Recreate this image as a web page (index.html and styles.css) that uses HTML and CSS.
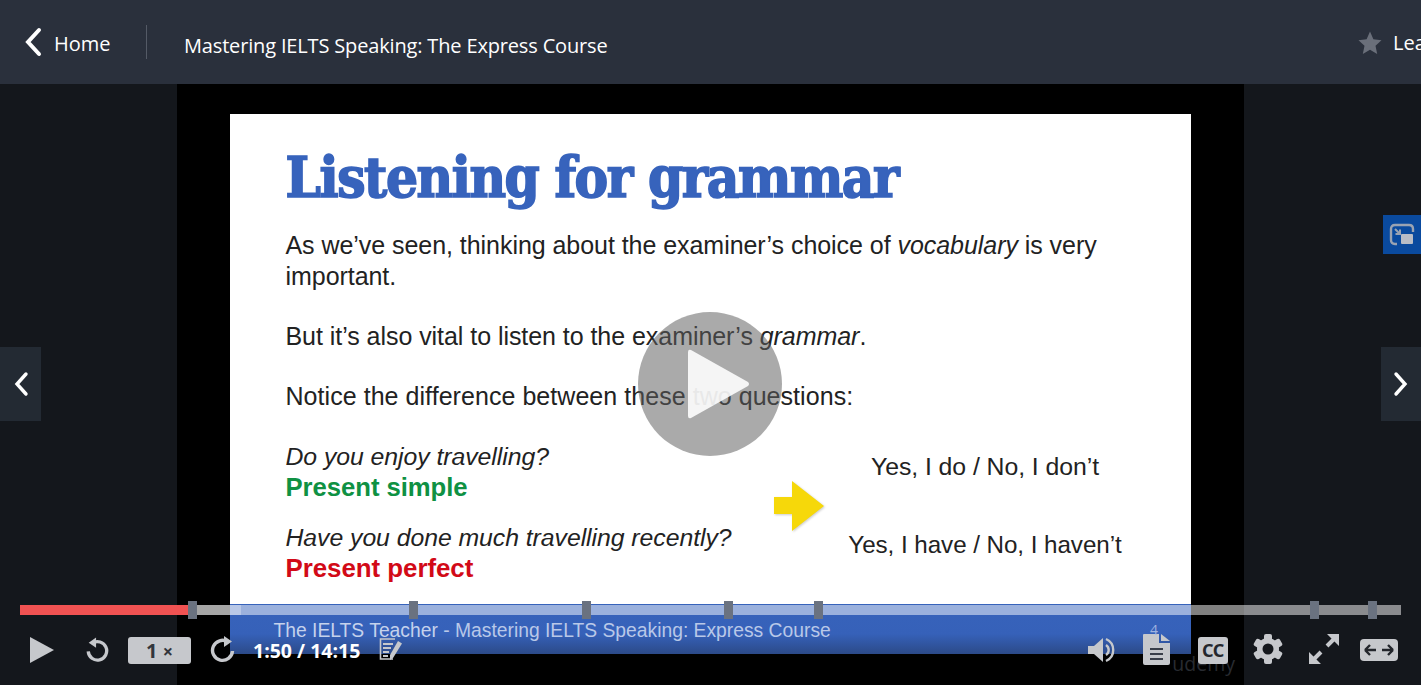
FILE: index.html
```html
<!DOCTYPE html>
<html lang="en">
<head>
    <meta charset="UTF-8">
    <title>Mastering IELTS Speaking: The Express Course</title>
    <link rel="stylesheet" href="styles.css">
</head>
<body>
    <header class="topbar">
        <a class="home-link">
            <svg class="home-chevron" width="20" height="30" viewBox="0 0 20 30"><path d="M16 3 L5 15 L16 27" fill="none" stroke="#fff" stroke-width="4" stroke-linecap="round" stroke-linejoin="miter"/></svg>
            <span>Home</span>
        </a>
        <div class="divider"></div>
        <div class="course-title">Mastering IELTS Speaking: The Express Course</div>
        <div class="rating">
            <svg width="24" height="24" viewBox="0 0 24 24"><path d="M12 0.5 L15.4 8.2 L23.5 9.2 L17.5 14.8 L19.2 23 L12 18.8 L4.8 23 L6.5 14.8 L0.5 9.2 L8.6 8.2 Z" fill="#6a6f7a"/></svg>
            <span>Leave a rating</span>
        </div>
    </header>

    <main class="stage">
        <div class="letterbox">
            <section class="slide">
                <div class="slide-body">
                    <h1 class="slide-title">Listening for grammar</h1>
                    <p class="para para-first">As we’ve seen, thinking about the examiner’s choice of <em>vocabulary</em> is very<br>important.</p>
                    <p class="para">But it’s also vital to listen to the examiner’s <em>grammar</em>.</p>
                    <p class="para para-notice">Notice the difference between these two questions:</p>
                    <div class="examples">
                        <div class="questions">
                            <p class="para q-first"><em>Do you enjoy travelling?</em><br><strong class="green">Present simple</strong></p>
                            <p class="para q-second"><em>Have you done much travelling recently?</em><br><strong class="red">Present perfect</strong></p>
                        </div>
                        <svg class="yellow-arrow" width="52" height="52" viewBox="0 0 52 52"><path d="M1 17 H19 V1 L51 26 L19 51 V34 H1 Z" fill="#f6d80a"/></svg>
                        <div class="answers">
                            <p class="para">Yes, I do / No, I don’t</p>
                            <p class="para answer-long">Yes, I have / No, I haven’t</p>
                        </div>
                    </div>
                </div>
                <div class="slide-footer">
                    <span>The IELTS Teacher</span> <span class="footer-sub">- Mastering IELTS Speaking: Express Course</span>
                </div>
            </section>
        </div>

        <button class="side-nav side-prev">
            <svg width="20" height="30" viewBox="0 0 20 30"><path d="M15 5 L6 15 L15 25" fill="none" stroke="#fff" stroke-width="3.4" stroke-linecap="round"/></svg>
        </button>
        <button class="side-nav side-next">
            <svg width="20" height="30" viewBox="0 0 20 30"><path d="M5 5 L14 15 L5 25" fill="none" stroke="#fff" stroke-width="3.4" stroke-linecap="round"/></svg>
        </button>

        <button class="pip">
            <svg width="26" height="24" viewBox="0 0 26 24">
                <path d="M8 21 H6 Q2 21 2 17 V6 Q2 2 6 2 H20 Q24 2 24 6 V9" fill="none" stroke="#9aa3b2" stroke-width="2.4"/>
                <path d="M6 6 L11 11 M11 6.5 V11 H6.5" fill="none" stroke="#9aa3b2" stroke-width="2"/>
                <rect x="12" y="11" width="12" height="10" rx="1" fill="#b9bdc6"/>
            </svg>
        </button>

        <div class="big-play">
            <svg width="64" height="70" viewBox="0 0 64 70"><path d="M4 1 L61 33 Q63 35 61 37 L4 69 Q1 70 1 67 V3 Q1 0 4 1 Z" fill="rgba(255,255,255,0.88)"/></svg>
        </div>

        <div class="player-controls">
            <div class="seekbar">
                <div class="seek-buffer"></div>
                <div class="seek-played"></div>
                <span class="marker" style="left: 12.45%"></span>
                <span class="marker" style="left: 28.45%"></span>
                <span class="marker" style="left: 41%"></span>
                <span class="marker" style="left: 51.3%"></span>
                <span class="marker" style="left: 57.8%"></span>
                <span class="marker" style="left: 93.7%"></span>
                <span class="marker" style="left: 97.9%"></span>
            </div>
            <div class="control-row">
                <div class="controls-left">
                    <svg class="ctl-play" width="24" height="26" viewBox="0 0 24 26"><path d="M0 0 L24 13 L0 26 Z" fill="#c6c8cc"/></svg>
                    <svg class="ctl-replay" width="24" height="27" viewBox="0 0 26 28"><path d="M8 6 A10 10 0 1 1 3.5 15" fill="none" stroke="#c6c8cc" stroke-width="3.6"/><path d="M12 0 V11 L4 5.5 Z" fill="#c6c8cc"/></svg>
                    <div class="speed">1 <small>×</small></div>
                    <svg class="ctl-forward" width="26" height="28" viewBox="0 0 26 28"><path d="M18 6 A10 10 0 1 0 22.5 15" fill="none" stroke="#c6c8cc" stroke-width="3.4"/><path d="M14 0 V11 L22 5.5 Z" fill="#c6c8cc"/></svg>
                    <div class="time">1:50 / 14:15</div>
                    <svg class="ctl-notes" width="24" height="24" viewBox="0 0 24 24">
                        <path d="M16 1 H1.5 V21 H14" fill="none" stroke="#c6c8cc" stroke-width="1.6"/>
                        <path d="M4 6 H14 M4 10 H12 M4 14 H10 M4 18 H9" stroke="#c6c8cc" stroke-width="1.8"/>
                        <path d="M19 3 L23 5.5 L14 20 L11 22 L11 17 Z" fill="#c6c8cc"/>
                    </svg>
                </div>
                <div class="controls-right">
                    <span class="watermark">udemy</span>
                    <svg class="ctl-volume" width="28" height="26" viewBox="0 0 28 26">
                        <path d="M0 9 H6 L15 1 V25 L6 17 H0 Z" fill="#c6c8cc"/>
                        <path d="M18 8 A6 6 0 0 1 18 18" fill="none" stroke="#c6c8cc" stroke-width="2.4"/>
                        <path d="M18 2 A12 12 0 0 1 18 24" fill="none" stroke="#c6c8cc" stroke-width="2.4"/>
                    </svg>
                    <div class="ctl-transcript">
                        <span class="doc-count">4</span>
                        <svg width="27" height="31" viewBox="0 0 27 31">
                            <path d="M1 0 H16 V9 H27 V29 Q27 31 25 31 H2 Q0 31 0 29 V1 Q0 0 1 0 Z" fill="#c6c8cc"/>
                            <path d="M18 0 L27 7 H18 Z" fill="#c6c8cc"/>
                            <path d="M7 15 H20 M7 20 H20 M7 25 H20" stroke="#3a3f4a" stroke-width="2.2"/>
                        </svg>
                    </div>
                    <div class="ctl-cc">CC</div>
                    <svg class="ctl-gear" width="30" height="30" viewBox="0 0 30 30">
                        <g fill="#c6c8cc">
                            <rect x="11" y="0" width="8" height="30" rx="2"/>
                            <rect x="11" y="0" width="8" height="30" rx="2" transform="rotate(60 15 15)"/>
                            <rect x="11" y="0" width="8" height="30" rx="2" transform="rotate(120 15 15)"/>
                        </g>
                        <circle cx="15" cy="15" r="8.5" fill="none" stroke="#c6c8cc" stroke-width="5"/>
                        <circle cx="15" cy="15" r="5.5" fill="#15181d"/>
                    </svg>
                    <svg class="ctl-expand" width="30" height="30" viewBox="0 0 30 30">
                        <path d="M3 27 L12 18 M18 12 L27 3" stroke="#c6c8cc" stroke-width="4"/>
                        <path d="M0 30 V18 L12 30 Z M30 0 V12 L18 0 Z" fill="#c6c8cc"/>
                    </svg>
                    <svg class="ctl-wide" width="38" height="22" viewBox="0 0 38 22">
                        <rect width="38" height="22" rx="4" fill="#c6c8cc"/>
                        <path d="M5 11 H16 M5 11 L10 6 M5 11 L10 16 M33 11 H22 M33 11 L28 6 M33 11 L28 16" fill="none" stroke="#23262c" stroke-width="2.4"/>
                    </svg>
                </div>
            </div>
        </div>
    </main>
</body>
</html>
```

FILE: styles.css
```css
html, body {
    height: 100%;
}

body {
    margin: 0;
    overflow: hidden;
    background-color: #14171c;
    font-family: "Open Sans", "Noto Sans", sans-serif;
    display: flex;
    flex-direction: column;
}

/* top bar */
.topbar {
    height: 84px;
    flex: none;
    background-color: #2a303c;
    color: #fff;
    display: flex;
    align-items: center;
    padding-left: 23px;
    position: relative;
    overflow: hidden;
}

.home-link {
    display: flex;
    align-items: center;
    gap: 11px;
    font-size: 20px;
    width: 123px;
}

.home-link span {
    margin-top: 2px;
}

.divider {
    width: 1px;
    height: 34px;
    background-color: #545a66;
}

.course-title {
    margin: 6px 0 0 37px;
    font-size: 20px;
    letter-spacing: -0.16px;
}

.rating {
    position: absolute;
    left: 1358px;
    top: 29px;
    display: flex;
    align-items: center;
    gap: 11px;
    font-size: 20px;
    white-space: nowrap;
}

/* video area */
.stage {
    flex: 1;
    position: relative;
    display: flex;
    justify-content: center;
}

.letterbox {
    width: 1067px;
    height: 100%;
    margin-right: 1px;
    background-color: #000;
    display: flex;
    justify-content: center;
    padding-top: 30px;
    box-sizing: border-box;
}

.slide {
    width: 961px;
    height: 540px;
    background-color: #fff;
    color: #222;
    display: flex;
    flex-direction: column;
    font-family: "Liberation Sans", Arial, sans-serif;
}

.slide-body {
    flex: 1;
    padding: 28px 0 0 56px;
}

.slide-title {
    margin: 0;
    font-family: "DejaVu Serif Condensed", "DejaVu Serif", serif;
    font-size: 56px;
    font-weight: bold;
    line-height: 70px;
    letter-spacing: -1.45px;
    -webkit-text-stroke: 1.6px #3763bc;
    color: #3763bc;
}

.para {
    margin: 30px 0 0;
    font-size: 25px;
    line-height: 30.5px;
    letter-spacing: -0.05px;
}

.para-first {
    margin-top: 18px;
}

.para-notice {
    margin-top: 29.5px;
    letter-spacing: 0.05px;
}

.examples {
    display: flex;
    position: relative;
}

.questions {
    width: 487px;
}

.questions em {
    font-size: 24.8px;
}

.q-first {
    margin-top: 29px;
}

.q-second {
    margin-top: 19px;
}

.green {
    color: #0f9143;
    font-size: 25.7px;
}

.red {
    color: #d20a17;
    font-size: 25.9px;
}

.yellow-arrow {
    margin-top: 68px;
    flex: none;
    filter: drop-shadow(1px 1px 1px rgba(0, 0, 0, 0.2));
}

.answers {
    margin-left: 23px;
    text-align: center;
    width: 275px;
}

.answers .para {
    margin-top: 40px;
    white-space: nowrap;
    font-size: 24.8px;
}

.answers .answer-long {
    margin-top: 48px;
    font-size: 24.2px;
}

.slide-footer {
    height: 50px;
    flex: none;
    padding: 16px 0 0 44px;
    box-sizing: border-box;
    background: linear-gradient(#3763bb 0, #3661b9 60%, #2c4a88 100%);
    color: #c5d2ec;
    font-size: 19.3px;
}

.footer-sub {
    color: #b9c8e8;
}

/* overlays */
.side-nav {
    position: absolute;
    top: 263px;
    width: 41px;
    height: 74px;
    padding: 0;
    border: none;
    background-color: #232a33;
    display: flex;
    align-items: center;
    justify-content: center;
}

.side-prev {
    left: 0;
}

.side-next {
    right: 0;
    width: 40px;
}

.pip {
    position: absolute;
    right: 0;
    top: 131px;
    width: 38px;
    height: 39px;
    padding: 0;
    border: none;
    background-color: #0a4a9e;
    display: flex;
    align-items: center;
    justify-content: center;
}

.big-play {
    position: absolute;
    left: 638px;
    top: 228px;
    width: 144px;
    height: 144px;
    border-radius: 50%;
    background-color: rgba(94, 94, 94, 0.53);
    display: flex;
    align-items: center;
    justify-content: center;
}

.big-play svg {
    margin-left: 18px;
}

.player-controls {
    position: absolute;
    left: 0;
    right: 0;
    bottom: 0;
    height: 81px;
    padding: 0 20px;
    box-sizing: border-box;
    z-index: 1;
}

.seekbar {
    position: relative;
    height: 10px;
    background-color: rgba(255, 255, 255, 0.5);
    margin-top: 1px;
}

.seek-buffer {
    position: absolute;
    left: 0;
    top: 0;
    bottom: 0;
    width: 221px;
    background-color: rgba(255, 255, 255, 0.3);
}

.seek-played {
    position: absolute;
    left: 0;
    top: 0;
    bottom: 0;
    width: 170px;
    background-color: #f05252;
}

.marker {
    position: absolute;
    top: -4px;
    width: 9px;
    height: 18px;
    margin-left: -4px;
    background-color: #6a7280;
}

.control-row {
    display: flex;
    justify-content: space-between;
    margin-top: 21px;
}

.controls-left,
.controls-right {
    display: flex;
    align-items: center;
    height: 28px;
}

.controls-right {
    position: relative;
    padding-right: 3px;
}

.ctl-play {
    margin-left: 10px;
}

.ctl-replay {
    margin-left: 31px;
}

.speed {
    margin-left: 19px;
    width: 63px;
    height: 27px;
    border-radius: 3px;
    background-color: #c6c8cc;
    color: #33363c;
    font-size: 20px;
    font-weight: bold;
    line-height: 27px;
    text-align: center;
}

.speed small {
    font-size: 18px;
}

.ctl-forward {
    margin-left: 19px;
}

.time {
    margin-left: 17px;
    color: #fff;
    font-size: 19.5px;
    font-weight: bold;
    white-space: nowrap;
}

.ctl-notes {
    margin-left: 19px;
}

.watermark {
    position: absolute;
    right: 166px;
    top: 14px;
    font-size: 19.5px;
    color: #282b31;
    z-index: -1;
}

.ctl-volume {
    left: 1px;
    position: relative;
}

.ctl-transcript {
    position: relative;
    margin-left: 28px;
    height: 31px;
    top: -1px;
}

.doc-count {
    position: absolute;
    left: 7px;
    top: -14px;
    font-size: 14px;
    color: #a0b4e0;
}

.ctl-cc {
    margin-left: 28px;
    width: 30px;
    height: 27px;
    border-radius: 3px;
    background-color: #c6c8cc;
    color: #23262c;
    font-family: "Noto Sans", sans-serif;
    font-size: 18px;
    font-weight: bold;
    line-height: 26px;
    text-align: center;
    letter-spacing: -0.5px;
}

.ctl-gear {
    margin-left: 25px;
    position: relative;
    top: -1px;
}

.ctl-expand {
    margin-left: 26px;
    position: relative;
    top: -1px;
}

.ctl-wide {
    margin-left: 21px;
}
```
